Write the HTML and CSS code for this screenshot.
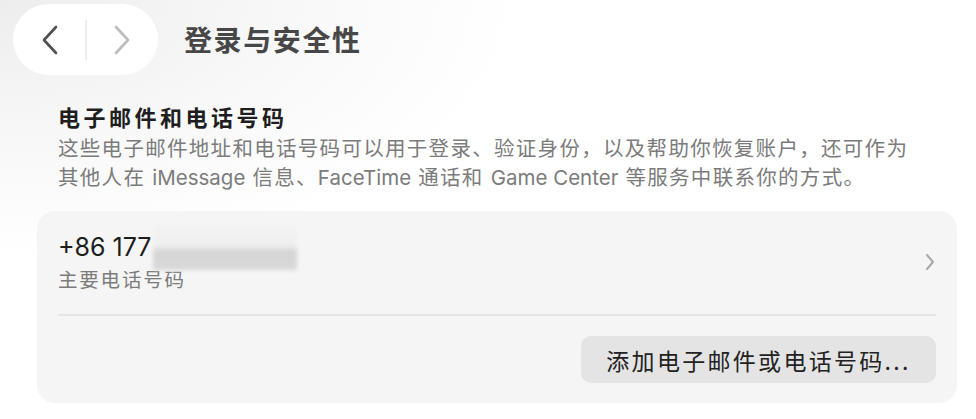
FILE: index.html
```html
<!DOCTYPE html>
<html lang="zh-CN">
<head>
    <meta charset="UTF-8">
    <title>登录与安全性</title>
    <link rel="stylesheet" href="styles.css">
</head>
<body>
    <header class="topbar">
        <div class="nav-pill">
            <div class="nav-btn">
                <svg width="18" height="30" viewBox="0 0 18 30"><path d="M15 2 L3 15 L15 28" fill="none" stroke="#505050" stroke-width="2.6" stroke-linecap="round" stroke-linejoin="round"/></svg>
            </div>
            <div class="nav-sep"></div>
            <div class="nav-btn">
                <svg width="18" height="30" viewBox="0 0 18 30"><path d="M3 2 L15 15 L3 28" fill="none" stroke="#bdbdbd" stroke-width="2.6" stroke-linecap="round" stroke-linejoin="round"/></svg>
            </div>
        </div>
        <h1 class="title">登录与安全性</h1>
    </header>

    <section class="section">
        <h2 class="section-title">电子邮件和电话号码</h2>
        <p class="section-desc">这些电子邮件地址和电话号码可以用于登录、验证身份，以及帮助你恢复账户，还可作为<br>其他人在 <span class="latin">iMessage</span> 信息、<span class="latin">FaceTime</span> 通话和 <span class="latin">Game Center</span> 等服务中联系你的方式。</p>

        <div class="card">
            <div class="row">
                <div class="row-text">
                    <div class="phone">+86 177<span class="masked"></span></div>
                    <div class="row-sub">主要电话号码</div>
                </div>
                <svg class="row-chevron" width="10" height="18" viewBox="0 0 10 18"><path d="M2 2 L8 9 L2 16" fill="none" stroke="#a8a8a8" stroke-width="2" stroke-linecap="round" stroke-linejoin="round"/></svg>
            </div>
            <div class="divider"></div>
            <div class="actions">
                <div class="btn">添加电子邮件或电话号码...</div>
            </div>
        </div>
    </section>
</body>
</html>
```

FILE: styles.css
```css
* {
    margin: 0;
    padding: 0;
    box-sizing: border-box;
}

body {
    width: 976px;
    height: 419px;
    overflow: hidden;
    font-family: Inter, "Noto Sans CJK SC", sans-serif;
    background: radial-gradient(ellipse 520px 260px at 0 0, #ededed 0%, #f8f8f8 55%, #ffffff 100%);
    color: #222;
}

.topbar {
    display: flex;
    align-items: center;
    padding: 4px 0 0 13px;
    gap: 26px;
}

.nav-pill {
    width: 145px;
    height: 71px;
    border-radius: 36px;
    background: #fff;
    display: flex;
    align-items: center;
    padding-left: 28px;
}

.nav-btn {
    width: 18px;
    height: 30px;
    display: flex;
}

.nav-sep {
    width: 2px;
    height: 40px;
    background: #ececec;
    margin: 0 26px 0 26px;
}

.title {
    font-family: "Noto Sans CJK SC", sans-serif;
    font-size: 28px;
    font-weight: 700;
    color: #474747;
    letter-spacing: 1.6px;
    line-height: 36px;
    margin-top: -2px;
}

.section {
    padding: 26px 0 0 37px;
}

.section-title {
    font-family: "Noto Sans CJK SC", sans-serif;
    font-size: 22px;
    font-weight: 700;
    color: #1e1e1e;
    letter-spacing: 3.5px;
    padding-left: 21px;
    line-height: 30px;
}

.section-desc {
    font-family: Inter, "Noto Sans CJK SC", sans-serif;
    font-size: 20.5px;
    color: #7b7b7b;
    letter-spacing: 1.3px;
    line-height: 28.5px;
    padding-left: 21px;
    margin-top: 4px;
}

.latin {
    letter-spacing: 0;
}

.card {
    margin-top: 19px;
    width: 920px;
    height: 192px;
    background: #f5f5f5;
    border-radius: 18px;
    padding: 0 21px;
}

.row {
    display: flex;
    align-items: flex-start;
    justify-content: space-between;
    height: 103px;
    padding-top: 21px;
}

.phone {
    font-size: 25px;
    color: #1d1d1d;
    line-height: 30px;
    height: 30px;
    display: flex;
    align-items: center;
}

.masked {
    display: inline-block;
    width: 144px;
    height: 44px;
    margin: -6px 0 -8px 1px;
    background: linear-gradient(#f3f3f3 0%, #efefef 45%, #d2d2d2 58%, #d6d6d6 100%);
    filter: blur(2px);
    opacity: 0.9;
}

.row-sub {
    font-family: "Noto Sans CJK SC", sans-serif;
    font-size: 19.5px;
    color: #7b7b7b;
    letter-spacing: 1.8px;
    line-height: 26px;
    margin-top: 4px;
}

.row-chevron {
    align-self: center;
    margin-top: -22px;
    margin-right: 1px;
}

.divider {
    height: 2px;
    background: #e6e6e6;
}

.actions {
    display: flex;
    justify-content: flex-end;
    padding-top: 20px;
}

.btn {
    width: 355px;
    height: 47px;
    border-radius: 10px;
    background: #e4e4e4;
    display: flex;
    align-items: center;
    justify-content: center;
    font-family: "Noto Sans CJK SC", sans-serif;
    font-size: 23px;
    color: #222;
    letter-spacing: 2.3px;
}
```
